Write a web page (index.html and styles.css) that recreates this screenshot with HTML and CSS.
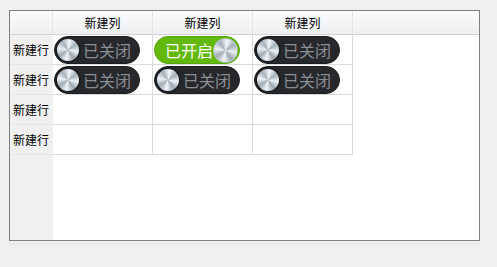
FILE: index.html
```html
<!DOCTYPE html>
<html lang="zh-CN">
<head>
    <meta charset="UTF-8">
    <title>表格开关</title>
    <link rel="stylesheet" href="styles.css">
</head>
<body>
    <div class="frame">
        <div class="grid">
            <div class="hd corner"></div>
            <div class="hd">新建列</div>
            <div class="hd">新建列</div>
            <div class="hd">新建列</div>
            <div class="hd last"></div>

            <div class="rh">新建行</div>
            <div class="cell"><div class="sw off"><span class="knob"></span><span class="txt">已关闭</span></div></div>
            <div class="cell"><div class="sw on"><span class="txt">已开启</span><span class="knob"></span></div></div>
            <div class="cell"><div class="sw off"><span class="knob"></span><span class="txt">已关闭</span></div></div>
            <div class="fill"></div>

            <div class="rh">新建行</div>
            <div class="cell"><div class="sw off"><span class="knob"></span><span class="txt">已关闭</span></div></div>
            <div class="cell"><div class="sw off"><span class="knob"></span><span class="txt">已关闭</span></div></div>
            <div class="cell"><div class="sw off"><span class="knob"></span><span class="txt">已关闭</span></div></div>
            <div class="fill"></div>

            <div class="rh">新建行</div>
            <div class="cell"></div>
            <div class="cell"></div>
            <div class="cell"></div>
            <div class="fill"></div>

            <div class="rh">新建行</div>
            <div class="cell"></div>
            <div class="cell"></div>
            <div class="cell"></div>
            <div class="fill"></div>

            <div class="rh empty"></div>
            <div class="blank"></div>
        </div>
    </div>
    <div class="shade"></div>
</body>
</html>
```

FILE: styles.css
```css
body { margin: 0; background: #f0f0f0; font-family: "Noto Sans CJK SC", "Noto Sans", sans-serif; color: #000; }
.frame { margin: 10px 0 0 9px; width: 469px; height: 229px; border: 1px solid #808080; background: #fff; overflow: hidden; }
.grid { display: grid; grid-template-columns: 43px 100px 100px 100px 1fr; grid-template-rows: 24px 30px 30px 30px 30px 1fr; height: 100%; }
.hd { background: linear-gradient(#fbfbfc, #eef0f2); border-bottom: 1px solid #d2d2d2; border-right: 1px solid #e4e6e8; font-size: 12px; line-height: 23px; text-align: center; }
.hd.last { border-right: none; }
.rh { background: #f0f0f0; border-bottom: 1px solid #e6e6e6; font-size: 12px; line-height: 29px; padding-left: 3px; white-space: nowrap; }
.rh.empty { border-bottom: none; }
.cell { border-right: 1px solid #dadada; border-bottom: 1px solid #dadada; padding: 1px 0 0 1px; }
.fill { background: #fff; }
.blank { grid-column: 2 / 6; background: #fff; }
.sw { width: 86px; height: 28px; border-radius: 14px; display: flex; align-items: center; box-sizing: border-box; }
.sw.off { background: #26282c; border: 1px solid #1c1d20; }
.sw.on { background: #62b80d; border: 1px solid #57a40a; justify-content: space-between; }
.knob { width: 26px; height: 26px; border-radius: 50%; box-sizing: border-box; border: 2px solid #1e1f22; background: conic-gradient(from 10deg, #f5f8fa, #a4afba 45deg, #eef2f6 90deg, #9aa6b2 135deg, #f3f6f9 180deg, #a1acb7 225deg, #edf1f5 270deg, #a6b0ba 315deg, #f5f8fa); flex: none; }
.sw.on .knob { border: 1px solid #b9c4cd; width: 25px; height: 25px; margin-right: 1px; }
.txt { font-size: 16px; line-height: 24px; }
.sw.off .txt { color: #8c8e92; margin-left: 2px; }
.sw.on .txt { color: #fff; margin-left: 10px; }
.shade { margin: 2px 0 0 9px; width: 471px; height: 2px; background: #e8eaea; }
```
